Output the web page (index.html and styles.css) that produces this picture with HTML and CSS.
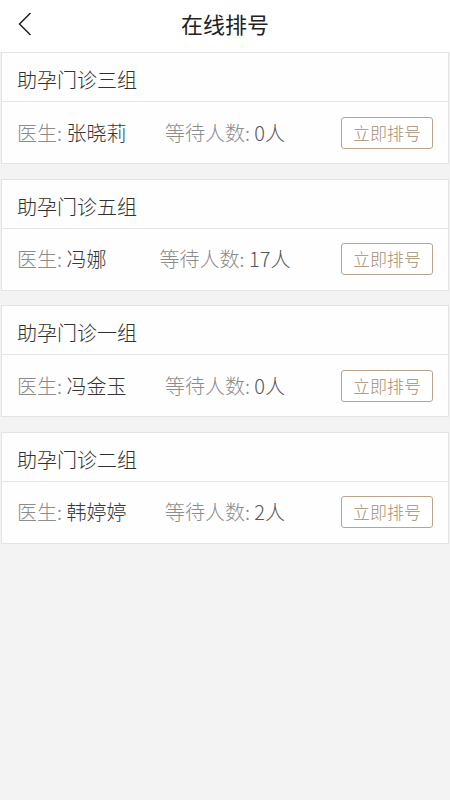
FILE: index.html
```html
<!DOCTYPE html>
<html lang="zh">
<head>
<meta charset="utf-8">
<title>在线排号</title>
<link rel="stylesheet" href="styles.css">
</head>
<body>
<header class="topbar">
  <span class="back">
    <svg width="14" height="24" viewBox="0 0 14 24"><path d="M12.5 1 L1.5 12 L12.5 23" fill="none" stroke="#222" stroke-width="1.5"/></svg>
  </span>
  <h1 class="title">在线排号</h1>
</header>
<main class="list">
  <section class="card">
    <div class="card-head">助孕门诊三组</div>
    <div class="card-body">
      <div class="doc"><span class="label">医生: </span><span class="val">张晓莉</span></div>
      <div class="wait"><span class="label">等待人数: </span><span class="num">0人</span></div>
      <div class="act"><button class="btn">立即排号</button></div>
    </div>
  </section>
  <section class="card">
    <div class="card-head">助孕门诊五组</div>
    <div class="card-body">
      <div class="doc"><span class="label">医生: </span><span class="val">冯娜</span></div>
      <div class="wait"><span class="label">等待人数: </span><span class="num">17人</span></div>
      <div class="act"><button class="btn">立即排号</button></div>
    </div>
  </section>
  <section class="card">
    <div class="card-head">助孕门诊一组</div>
    <div class="card-body">
      <div class="doc"><span class="label">医生: </span><span class="val">冯金玉</span></div>
      <div class="wait"><span class="label">等待人数: </span><span class="num">0人</span></div>
      <div class="act"><button class="btn">立即排号</button></div>
    </div>
  </section>
  <section class="card">
    <div class="card-head">助孕门诊二组</div>
    <div class="card-body">
      <div class="doc"><span class="label">医生: </span><span class="val">韩婷婷</span></div>
      <div class="wait"><span class="label">等待人数: </span><span class="num">2人</span></div>
      <div class="act"><button class="btn">立即排号</button></div>
    </div>
  </section>
</main>
</body>
</html>
```

FILE: styles.css
```css
* { box-sizing: border-box; }
html, body {
  margin: 0;
  padding: 0;
}
body {
  background: #f3f3f3;
  font-family: "Noto Sans CJK SC", "Noto Sans", sans-serif;
  font-weight: 300;
  color: #333;
  width: 450px;
  min-height: 800px;
}
.topbar {
  position: relative;
  height: 52px;
  background: #fff;
  display: flex;
  align-items: center;
  justify-content: center;
}
.back {
  position: absolute;
  left: 18px;
  top: 12px;
  width: 14px;
  height: 24px;
  display: block;
}
.back svg { display: block; }
.title {
  margin: 0;
  font-size: 22px;
  font-weight: 400;
  color: #222;
  line-height: 30px;
  margin-top: -6px;
}
.list {
  display: flex;
  flex-direction: column;
  gap: 14.67px;
}
.card {
  background: #fefefe;
  border: 1px solid #e3e3e3;
  margin: 0 1px;
  height: 112px;
}
.card-head {
  height: 49px;
  padding: 13px 15px 0;
  font-size: 20px;
  line-height: 28px;
  color: #303030;
  border-bottom: 1px solid #e6e6e6;
}
.card-body {
  height: 61px;
  padding: 0 15px 0 15px;
  display: grid;
  grid-template-columns: 1fr auto 1fr;
  align-items: center;
  font-size: 20px;
  line-height: 26px;
}
.label { color: #8c8c8c; }
.val { color: #363636; }
.num { color: #555; }
.wait { text-align: center; }
.act {
  display: flex;
  justify-content: flex-end;
}
.btn {
  font-family: inherit;
  font-weight: 300;
  width: 92px;
  height: 32px;
  padding: 0;
  font-size: 17px;
  line-height: 28px;
  color: #a58d70;
  background: #fff;
  border: 1px solid #b9a58b;
  border-radius: 3px;
}
```
